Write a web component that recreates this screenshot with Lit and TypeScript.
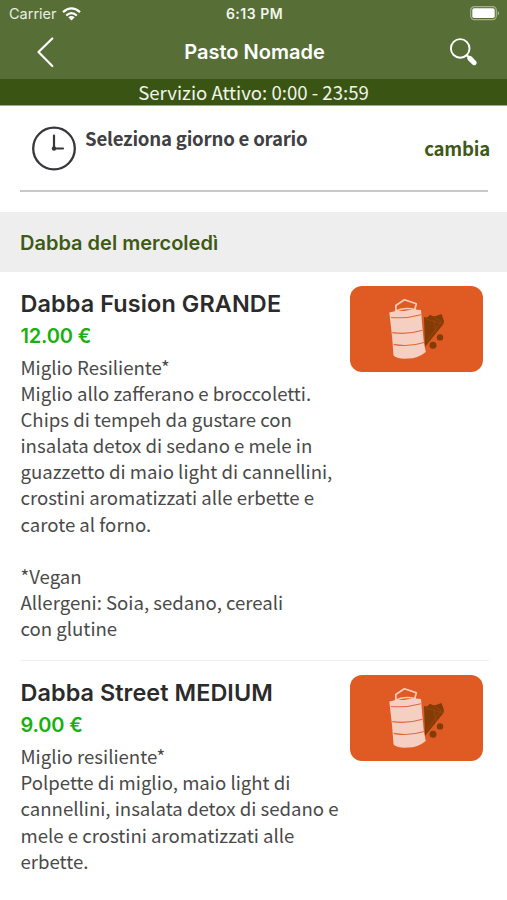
import { LitElement, html, css, svg } from "lit";
import { customElement, property } from "lit/decorators.js";

interface Dish {
  name: string;
  price: string;
  tight: string;
  lines: string[];
}

const DISHES: Dish[] = [
  {
    name: "Dabba Fusion GRANDE",
    price: "12.00 €",
    tight: "fusion",
    lines: [
      "Miglio Resiliente*",
      "Miglio allo zafferano e broccoletti.",
      "Chips di tempeh da gustare con",
      "insalata detox di sedano e mele in",
      "guazzetto di maio light di cannellini,",
      "crostini aromatizzati alle erbette e",
      "carote al forno.",
      "",
      "*Vegan",
      "Allergeni: Soia, sedano, cereali",
      "con glutine",
    ],
  },
  {
    name: "Dabba Street MEDIUM",
    price: "9.00 €",
    tight: "street",
    lines: [
      "Miglio resiliente*",
      "Polpette di miglio, maio light di",
      "cannellini, insalata detox di sedano e",
      "mele e crostini aromatizzati alle",
      "erbette.",
    ],
  },
];

const tiffin = svg`
  <path d="M46 25.5 L45.8 19.5 L54.4 13.8 L66.4 17.8 L64.4 24.5" fill="none" stroke="#f6cdbd" stroke-width="1.7" stroke-linejoin="round"/>
  <path d="M45 25.5 Q54 20.5 66 24" fill="none" stroke="#f6cdbd" stroke-width="1.5"/>
  <path d="M74 31 L77 31.5 L80 28.8 L83 30.3 L86 30 L91.5 28 L94 35 L93.5 38 L87 46 L75 61 Z" fill="#833c06"/>
  <path d="M76 33 L93 38 M84 31 L92 36 M86 46 L84 34 M77 55 L91 36" stroke="#a84811" stroke-width=".6" fill="none"/>
  <circle cx="90" cy="51.4" r="3.2" fill="#833c06"/>
  <circle cx="83" cy="59.2" r="3.5" fill="#833c06"/>
  <path d="M39.3 26.5 Q47 24 54 25 Q63 22.5 71 24 L72.3 40 L73.8 56 L75.8 66 Q68 72.5 58 72.6 Q48 73.4 43.5 69.5 L42 50 Z" fill="#f4cfc2"/>
  <path d="M41 31.5 Q56 32.8 71 28.7 M42.3 46.6 Q57 49 72.4 44.2 M43.6 58.4 Q58 61.5 74 56.4" fill="none" stroke="#df6a3d" stroke-width="1.1"/>
`;

@customElement("dish-row")
class DishRow extends LitElement {
  @property({ attribute: false }) dish!: Dish;

  static styles = css`
    :host {
      display: grid;
      grid-template-columns: 1fr 133px;
      padding: 0 24px 0 20.5px;
      color: #4a4a4a;
    }
    .info {
      padding-top: 15.5px;
    }
    .name {
      margin: 0;
      font: 600 23.4px/32px Inter, sans-serif;
      color: #2b2b2b;
      white-space: nowrap;
    }
    .fusion {
      letter-spacing: 0.12px;
    }
    .street {
      letter-spacing: 0.07px;
    }
    .price {
      margin-bottom: 2.5px;
      font: 600 20px/32px Inter, sans-serif;
      letter-spacing: -0.15px;
      color: #19b010;
      white-space: nowrap;
    }
    .line {
      font: 400 18.6px/26.1px "Noto Sans CJK SC", sans-serif;
      height: 26.1px;
      white-space: nowrap;
    }
    .photo {
      display: block;
      width: 133px;
      height: 85.5px;
      margin-top: 14px;
      border-radius: 12px;
      background: #e05a24;
    }
  `;

  render() {
    const d = this.dish;
    return html`
      <div class="info">
        <h3 class="name ${d.tight}">${d.name}</h3>
        <div class="price">${d.price}</div>
        ${d.lines.map((l) => html`<div class="line">${l}</div>`)}
      </div>
      <svg class="photo" viewBox="0 0 133 85.5">${tiffin}</svg>
    `;
  }
}

@customElement("app-root")
class AppRoot extends LitElement {
  static styles = css`
    :host {
      display: block;
      width: 507px;
      height: 900px;
      overflow: hidden;
      background: #fff;
    }
    .top {
      height: 79px;
      background: #576f36;
      color: #fff;
    }
    .status {
      display: grid;
      grid-template-columns: 1fr auto 1fr;
      align-items: center;
      height: 27px;
      padding: 0 7px 0 9px;
      font: 500 13.5px/27px Inter, sans-serif;
    }
    .carrier {
      display: flex;
      align-items: center;
      gap: 5px;
      font-weight: 400;
      font-size: 14.5px;
      color: #e9eee2;
    }
    .time {
      font-weight: 600;
      font-size: 14px;
      letter-spacing: 0.5px;
      color: #f1f5ec;
    }
    .battery {
      justify-self: end;
    }
    .nav {
      display: grid;
      grid-template-columns: 36px 1fr 40px;
      align-items: center;
      height: 50px;
      padding: 0 23px 0 29px;
    }
    .title {
      margin: 0;
      text-align: center;
      font: 600 20px/50px Inter, sans-serif;
    }
    .search {
      justify-self: end;
    }
    svg {
      display: block;
    }
    .service {
      height: 26px;
      background: #3a5513;
      border-bottom: 1px solid #9ab57c;
      color: #f0f4ea;
      text-align: center;
      font: 400 18.6px/26px "Noto Sans CJK SC", sans-serif;
    }
    .slot {
      display: flex;
      height: 84px;
      margin: 0 19px 0 20px;
      border-bottom: 2px solid #c8c8c8;
    }
    .clock {
      margin: 19px 8px 0 11px;
    }
    .pick,
    .change {
      font: 700 18.6px/26px "Noto Sans CJK SC", sans-serif;
      letter-spacing: -0.21px;
      white-space: nowrap;
    }
    .pick {
      flex: 1;
      padding-top: 19px;
      color: #404044;
    }
    .change {
      padding-top: 29px;
      margin-right: -2px;
      color: #3f5a17;
    }
    .section {
      height: 60px;
      margin: 20px 0 0;
      padding-left: 20px;
      background: #eee;
      color: #3f5a17;
      font: 600 20px/62px Inter, sans-serif;
    }
    .rule {
      height: 1.6px;
      margin: 18.6px 18px 0 20px;
      background: #f0f0f0;
    }
  `;

  render() {
    return html`
      <header class="top">
        <div class="status">
          <span class="carrier">
            <span>Carrier</span>
            <svg width="19" height="14" viewBox="0 0 19 14" fill="none" stroke="#fff" stroke-width="2.3">
              <path d="M1 5.2 Q9.5 -2.4 18 5.2" />
              <path d="M4.2 8.5 Q9.5 3.8 14.8 8.5" />
              <path d="M9.5 13.4 L6.3 10.2 Q9.5 7.8 12.7 10.2 Z" fill="#fff" stroke="none" />
            </svg>
          </span>
          <span class="time">6:13 PM</span>
          <svg class="battery" width="30" height="15" viewBox="0 0 30 15">
            <rect x=".7" y=".7" width="25.6" height="13" rx="3.6" fill="none" stroke="#a3b08f" stroke-width="1.2" />
            <rect x="2.3" y="2.3" width="22.4" height="9.8" rx="1.8" fill="#fff" />
            <path d="M27.6 5 Q30.6 7.2 27.6 9.5 Z" fill="#a3b08f" />
          </svg>
        </div>
        <div class="nav">
          <svg width="30" height="34" viewBox="0 0 30 34">
            <path d="M23.3 3.5 L9.5 17 L23.3 31" fill="none" stroke="#fff" stroke-width="2.2" stroke-linecap="round" stroke-linejoin="round" />
          </svg>
          <h1 class="title">Pasto Nomade</h1>
          <svg class="search" width="36" height="34" viewBox="0 0 36 34" fill="none" stroke="#fff">
            <circle cx="12.2" cy="13.4" r="9.3" stroke-width="1.9" />
            <path d="M18.6 20 L21.4 23" stroke-width="2.2" />
            <path d="M21.8 23.4 L26.2 27.7" stroke-width="5" stroke-linecap="round" />
          </svg>
        </div>
      </header>
      <div class="service">Servizio Attivo: 0:00 - 23:59</div>
      <section class="slot">
        <svg class="clock" width="46" height="46" viewBox="0 0 46 46" fill="none" stroke="#38383c">
          <circle cx="23" cy="23.5" r="20.8" stroke-width="2.3" />
          <path d="M23 10.5 V23.5 H32" stroke-width="2.2" stroke-linecap="round" />
          <circle cx="23" cy="23.5" r="2.2" fill="#38383c" stroke="none" />
        </svg>
        <div class="pick">Seleziona giorno e orario</div>
        <div class="change">cambia</div>
      </section>
      <h2 class="section">Dabba del mercoledì</h2>
      <dish-row .dish=${DISHES[0]}></dish-row>
      <div class="rule"></div>
      <dish-row .dish=${DISHES[1]}></dish-row>
    `;
  }
}
